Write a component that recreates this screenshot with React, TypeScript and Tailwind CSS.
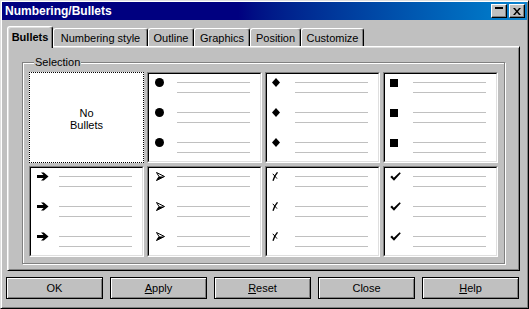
import type { ReactNode } from 'react';

const tabs = [
  { label: 'Bullets', w: 'w-[46px]', active: true },
  { label: 'Numbering style', w: 'w-[95px]' },
  { label: 'Outline', w: 'w-[46px]' },
  { label: 'Graphics', w: 'w-[56px]' },
  { label: 'Position', w: 'w-[51px]' },
  { label: 'Customize', w: 'w-[63px]' },
];

const Dot = () => <div className="ml-px w-[9px] h-[9px] rounded-full bg-black" />;
const Square = () => <div className="w-[8px] h-[8px] bg-black" />;

const Diamond = () => (
  <svg width="8" height="9" viewBox="0 0 8 9">
    <path d="M4 0L8 4.5 4 9 0 4.5z" fill="#000" />
  </svg>
);

const Arrow = () => (
  <svg className="ml-[1px]" width="12" height="9" viewBox="0 0 12 9">
    <path d="M0 3h6.5L4 0.5h2.8L11.5 4.5 6.8 8.5H4L6.5 6H0z" fill="#000" />
  </svg>
);

const Arrowhead = () => (
  <svg className="ml-[2px]" width="9" height="9" viewBox="0 0 9 9">
    <path d="M0.5 0.5L8.5 4.5 0.5 8.5 3 4.5z" fill="none" stroke="#000" strokeWidth="1" />
    <path d="M3 4.5H8.5L0.5 8.5z" fill="#000" />
  </svg>
);

const Ballot = () => (
  <svg width="6" height="9" viewBox="0 0 6 9">
    <path d="M1 8.7C2 5.5 3.3 2.6 5.5 0.3" fill="none" stroke="#000" strokeWidth="1.3" />
    <path d="M0.8 1.8L5 6.6" fill="none" stroke="#000" strokeWidth="1" />
  </svg>
);

const Check = () => (
  <svg width="11" height="9" viewBox="0 0 11 9">
    <path d="M0.3 5L2 3.6 3.8 5.8 9.6 0.3 10.8 1.3 4 8.8z" fill="#000" />
  </svg>
);

function Cell({ bullet }: { bullet: ReactNode }) {
  return (
    <div className="h-[91px] border border-t-[#808080] border-l-[#808080] border-r-white border-b-white">
      <div className="h-full flex flex-col gap-[14px] pt-[3px] bg-white border border-t-black border-l-black border-r-[#dfdfdf] border-b-[#dfdfdf]">
        {[0, 1, 2].map((i) => (
          <div key={i}>
            <div className="flex items-center h-[11px]">
              <div className="w-[28px] pl-[5px] flex items-center">{bullet}</div>
              <div className="h-px w-[73px] bg-[#c0c0c0]" />
            </div>
            <div className="ml-[28px] mt-[4px] h-px w-[73px] bg-[#c0c0c0]" />
          </div>
        ))}
      </div>
    </div>
  );
}

function Button({ children }: { children: ReactNode }) {
  return (
    <button className="w-[97px] h-[22px] border border-black bg-[#c0c0c0] shadow-[inset_1px_1px_0_#fff,inset_-1px_-1px_0_#808080] text-[11px] leading-[13px] text-black">
      {children}
    </button>
  );
}

export default function App() {
  return (
    <div className="w-[529px] h-[309px] bg-[#c0c0c0] p-px border border-t-[#dfdfdf] border-l-[#dfdfdf] border-r-black border-b-black shadow-[inset_1px_1px_0_#fff,inset_-1px_-1px_0_#808080] font-['Liberation_Sans',Arial,sans-serif] text-[11px] text-black select-none">
      {/* title bar */}
      <div className="h-[18px] flex items-center justify-between pl-[3px] pr-[2px] bg-linear-to-r from-[#000080] from-45% to-[#1084d0]">
        <span className="text-white font-bold text-[12px] leading-[14px]">Numbering/Bullets</span>
        <div className="flex gap-[2px]">
          <div className="w-[16px] h-[14px] bg-[#c0c0c0] border border-t-white border-l-white border-r-black border-b-black shadow-[inset_-1px_-1px_0_#808080] flex justify-center pt-[2px]">
            <div className="w-[8px] h-[2px] bg-black" />
          </div>
          <div className="w-[16px] h-[14px] bg-[#c0c0c0] border border-t-white border-l-white border-r-black border-b-black shadow-[inset_-1px_-1px_0_#808080] flex items-center justify-center">
            <svg width="8" height="7" viewBox="0 0 8 7">
              <path d="M0 0h2l2 2.5L6 0h2L5 3.5 8 7H6L4 4.5 2 7H0l3-3.5z" fill="#000" />
            </svg>
          </div>
        </div>
      </div>

      {/* tabs */}
      <div className="mt-[6px] ml-[5px] h-[20px] flex items-end relative z-10">
        {tabs.map((t) =>
          t.active ? (
            <div
              key={t.label}
              className={`${t.w} h-[22px] -mb-[2px] bg-[#c0c0c0] border-t border-l border-t-white border-l-white border-r border-r-black rounded-t-[3px] shadow-[inset_-1px_0_0_#808080,inset_1px_1px_0_#dfdfdf] pt-[4px] text-center font-bold leading-[13px]`}
            >
              {t.label}
            </div>
          ) : (
            <div
              key={t.label}
              className={`${t.w} h-[18px] bg-[#c0c0c0] border-t border-l border-t-white border-l-white border-r border-r-black rounded-t-[3px] shadow-[inset_-1px_0_0_#808080] pt-[3px] text-center leading-[13px]`}
            >
              {t.label}
            </div>
          )
        )}
      </div>

      {/* tab panel */}
      <div className="ml-[5px] w-[513px] h-[225px] border border-t-white border-l-white border-r-black border-b-black shadow-[inset_1px_1px_0_#dfdfdf,inset_-1px_-1px_0_#808080] p-px">
        <div className="relative mt-[14px] ml-[13px] w-[483px] h-[202px] border border-[#808080] shadow-[1px_1px_0_#fff,inset_1px_1px_0_#fff] pt-[9px] pl-[6px]">
          <span className="absolute -top-[7px] left-[11px] bg-[#c0c0c0] px-px leading-[13px]">Selection</span>
          <div className="grid grid-cols-[115px_115px_115px_115px] gap-[3px]">
            <div className="h-[91px] border border-dotted border-black bg-white flex flex-col items-center justify-center text-center leading-[12px] pt-[2px]">
              <span>No</span>
              <span>Bullets</span>
            </div>
            <Cell bullet={<Dot />} />
            <Cell bullet={<Diamond />} />
            <Cell bullet={<Square />} />
            <Cell bullet={<Arrow />} />
            <Cell bullet={<Arrowhead />} />
            <Cell bullet={<Ballot />} />
            <Cell bullet={<Check />} />
          </div>
        </div>
      </div>

      {/* buttons */}
      <div className="mt-[6px] pl-[4px] flex gap-[7px]">
        <Button>OK</Button>
        <Button>
          <span className="underline underline-offset-1">A</span>pply
        </Button>
        <Button>
          <span className="underline underline-offset-1">R</span>eset
        </Button>
        <Button>Close</Button>
        <Button>
          <span className="underline underline-offset-1">H</span>elp
        </Button>
      </div>
    </div>
  );
}
